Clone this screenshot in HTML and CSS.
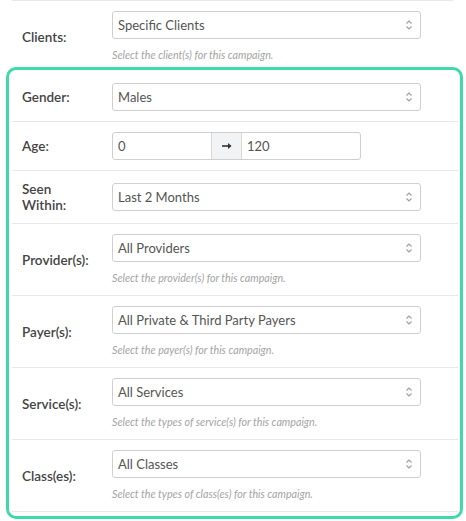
FILE: index.html
```html
<!DOCTYPE html>
<html>
<head>
<meta charset="utf-8">
<link rel="stylesheet" href="styles.css">
</head>
<body>
<div class="page">
  <div class="row outer">
    <label class="lbl">Clients:</label>
    <div class="field">
      <div class="select"><span>Specific Clients</span><svg class="chev" viewBox="0 0 8 12" width="8" height="12"><path d="M1.5 4.5 L4 2 L6.5 4.5 M1.5 7.5 L4 10 L6.5 7.5"/></svg></div>
      <div class="help">Select the client(s) for this campaign.</div>
    </div>
  </div>
  <div class="box">
    <div class="row first">
      <label class="lbl">Gender:</label>
      <div class="field">
        <div class="select"><span>Males</span><svg class="chev" viewBox="0 0 8 12" width="8" height="12"><path d="M1.5 4.5 L4 2 L6.5 4.5 M1.5 7.5 L4 10 L6.5 7.5"/></svg></div>
      </div>
    </div>
    <div class="row">
      <label class="lbl">Age:</label>
      <div class="field">
        <div class="range">
          <div class="inp from">0</div>
          <div class="addon"><svg viewBox="0 0 12 10" width="12" height="10"><path d="M1 5 H9.5" class="shaft"/><path d="M7 2 L10.5 5 L7 8 Z" class="head"/></svg></div>
          <div class="inp to">120</div>
        </div>
      </div>
    </div>
    <div class="row">
      <label class="lbl two">Seen<br>Within:</label>
      <div class="field">
        <div class="select"><span>Last 2 Months</span><svg class="chev" viewBox="0 0 8 12" width="8" height="12"><path d="M1.5 4.5 L4 2 L6.5 4.5 M1.5 7.5 L4 10 L6.5 7.5"/></svg></div>
      </div>
    </div>
    <div class="row">
      <label class="lbl">Provider(s):</label>
      <div class="field">
        <div class="select"><span>All Providers</span><svg class="chev" viewBox="0 0 8 12" width="8" height="12"><path d="M1.5 4.5 L4 2 L6.5 4.5 M1.5 7.5 L4 10 L6.5 7.5"/></svg></div>
        <div class="help">Select the provider(s) for this campaign.</div>
      </div>
    </div>
    <div class="row">
      <label class="lbl">Payer(s):</label>
      <div class="field">
        <div class="select"><span>All Private &amp; Third Party Payers</span><svg class="chev" viewBox="0 0 8 12" width="8" height="12"><path d="M1.5 4.5 L4 2 L6.5 4.5 M1.5 7.5 L4 10 L6.5 7.5"/></svg></div>
        <div class="help">Select the payer(s) for this campaign.</div>
      </div>
    </div>
    <div class="row">
      <label class="lbl">Service(s):</label>
      <div class="field">
        <div class="select"><span>All Services</span><svg class="chev" viewBox="0 0 8 12" width="8" height="12"><path d="M1.5 4.5 L4 2 L6.5 4.5 M1.5 7.5 L4 10 L6.5 7.5"/></svg></div>
        <div class="help">Select the types of service(s) for this campaign.</div>
      </div>
    </div>
    <div class="row">
      <label class="lbl">Class(es):</label>
      <div class="field">
        <div class="select"><span>All Classes</span><svg class="chev" viewBox="0 0 8 12" width="8" height="12"><path d="M1.5 4.5 L4 2 L6.5 4.5 M1.5 7.5 L4 10 L6.5 7.5"/></svg></div>
        <div class="help">Select the types of class(es) for this campaign.</div>
      </div>
    </div>
  </div>
</div>
</body>
</html>
```

FILE: styles.css
```css
html, body {
  margin: 0;
  padding: 0;
  background: #fff;
}
body {
  font-family: Lato, "Open Sans", sans-serif;
  color: #555;
}
.page {
  width: 466px;
}
.row {
  display: grid;
  grid-template-columns: 90px 309px;
  align-items: center;
  padding: 10px 0 10px 10px;
  border-bottom: 1px solid #e9e9e9;
}
.row.outer {
  margin: 0 13px 0 12px;
  border-top: 1px solid #e9e9e9;
  border-bottom: none;
  padding-bottom: 5px;
}
.row.first {
  padding-top: 13px;
}
.lbl {
  font-size: 13.5px;
  font-weight: 600;
  color: #444;
  line-height: 16px;
}
.field {
  display: flex;
  flex-direction: column;
}
.select {
  height: 28px;
  box-sizing: border-box;
  border: 1px solid #cfcfcf;
  border-radius: 3px;
  display: flex;
  align-items: center;
  justify-content: space-between;
  padding: 0 7px 0 5px;
  font-size: 13px;
  color: #555;
  background: #fff;
}
.chev {
  fill: none;
  stroke: #a0a0a0;
  stroke-width: 1.2;
}
.help {
  margin-top: 8px;
  font-size: 10.7px;
  line-height: 15px;
  font-style: italic;
  color: #a4a4a4;
}
.box {
  margin-left: 6px;
  width: 457px;
  box-sizing: border-box;
  border: 3px solid #40d9a9;
  border-radius: 10px;
  padding: 0 2px 4px 3px;
}
.range {
  display: flex;
  width: 249px;
  height: 28px;
  box-sizing: border-box;
  border: 1px solid #cfcfcf;
  border-radius: 3px;
  font-size: 13px;
  color: #555;
}
.inp {
  display: flex;
  align-items: center;
  padding-left: 5px;
}
.inp.from {
  width: 98px;
  box-sizing: border-box;
}
.inp.to {
  flex: 1;
}
.addon {
  width: 31px;
  box-sizing: border-box;
  background: #f1f3f5;
  border-left: 1px solid #d8d8d8;
  border-right: 1px solid #d8d8d8;
  display: flex;
  align-items: center;
  justify-content: center;
}
.addon .shaft {
  stroke: #333;
  stroke-width: 1.6;
  fill: none;
}
.addon .head {
  fill: #333;
}
```
